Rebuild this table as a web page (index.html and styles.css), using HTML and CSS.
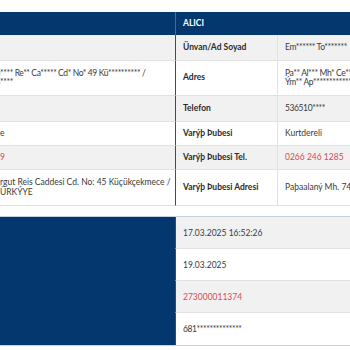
FILE: index.html
```html
<!DOCTYPE html>
<html lang="tr">
<head>
<meta charset="utf-8">
<title>Gönderi Detayı</title>
<link rel="stylesheet" href="styles.css">
</head>
<body>
<div class="page">
  <section class="top">
    <div class="cell hd"></div>
    <div class="cell hd lab first">ALICI</div>
    <div class="cell hd val"></div>

    <div class="cell g"></div>
    <div class="cell g lab first">Ünvan/Ad Soyad</div>
    <div class="cell g val mask">Em****** To*******</div>

    <div class="cell w"><div class="txt mask"><span class="cut">Tu</span>**** Re** Ca***** Cd* No* 49 Kü********** /<br><span class="cut">İS</span>****</div></div>
    <div class="cell w lab first">Adres</div>
    <div class="cell w val"><div class="txt mask">Pa** Al*** Mh* Ce** Sk* No* 12<br>Ým** Ap************ / ****</div></div>

    <div class="cell g"><div class="txt"><span class="cut">0532 111 ****</span></div></div>
    <div class="cell g lab first">Telefon</div>
    <div class="cell g val mask">536510****</div>

    <div class="cell w"><div class="txt"><span class="cut">Küçükçekm</span>e</div></div>
    <div class="cell w lab first">Varýþ Þubesi</div>
    <div class="cell w val">Kurtdereli</div>

    <div class="cell g"><div class="txt red"><span class="cut">0212 580 222</span>9</div></div>
    <div class="cell g lab first">Varýþ Þubesi Tel.</div>
    <div class="cell g val red">0266 246 1285</div>

    <div class="cell w"><div class="txt"><span class="cut">Tu</span>rgut Reis Caddesi Cd. No: 45 Küçükçekmece /<br><span class="cut">T</span>ÜRKÝYE</div></div>
    <div class="cell w lab first">Varýþ Þubesi Adresi</div>
    <div class="cell w val"><div class="txt">Paþaalaný Mh. 74 Sk. No: 3 Balıkesir</div></div>
  </section>

  <section class="bottom">
    <div class="side"></div>
    <div class="row g first">17.03.2025 16:52:26</div>
    <div class="row w first">19.03.2025</div>
    <div class="row g first red">273000011374</div>
    <div class="row w first mask">681**************</div>
  </section>
</div>
</body>
</html>
```

FILE: styles.css
```css
html, body {
  margin: 0;
  padding: 0;
  background: #ffffff;
}

body {
  width: 350px;
  height: 350px;
  overflow: hidden;
  font-family: Lato, "Noto Sans", sans-serif;
  font-size: 8.5px;
  color: #3a3a3a;
}

.page {
  width: 560px;
  padding-top: 12px;
}

.top {
  display: grid;
  grid-template-columns: 175px 103px 1fr;
  grid-template-rows: 23px 26px 35px 26px 24px 24px 36px;
}

.cell {
  display: flex;
  align-items: center;
  box-sizing: border-box;
  border-bottom: 1px solid #e2e2e2;
  line-height: 9.5px;
  white-space: nowrap;
}

.hd {
  background: #05376f;
  color: #ffffff;
  font-weight: 700;
  border-bottom: none;
}

.g { background: #f1f1f1; }
.w { background: #ffffff; }

.lab {
  padding-left: 7px;
  font-weight: 700;
  color: #2b2b2b;
  border-right: 1px solid #e2e2e2;
}

.hd.lab {
  color: #ffffff;
  border-right: none;
}

.val {
  padding-left: 7px;
}

.first {
  border-left: 1px solid #1f5293;
}

.hd.first {
  border-left: 1px solid #3e6ba6;
}

.txt {
  white-space: nowrap;
}

.mask {
  letter-spacing: -0.4px;
}

.cut {
  display: inline-flex;
  justify-content: flex-end;
  width: 0;
  white-space: nowrap;
}

.red { color: #e2474f; }

.bottom {
  display: grid;
  grid-template-columns: 175px 1fr;
  grid-template-rows: repeat(4, 32px);
  margin-top: 10px;
  border-top: 1px solid #c8d2df;
  border-bottom: 1px solid #c8d2df;
}

.side {
  grid-row: 1 / 5;
  background: #05376f;
}

.row {
  display: flex;
  align-items: center;
  padding-left: 7px;
  box-sizing: border-box;
  border-bottom: 1px solid #e2e2e2;
}

.row:last-child { border-bottom: none; }
```
